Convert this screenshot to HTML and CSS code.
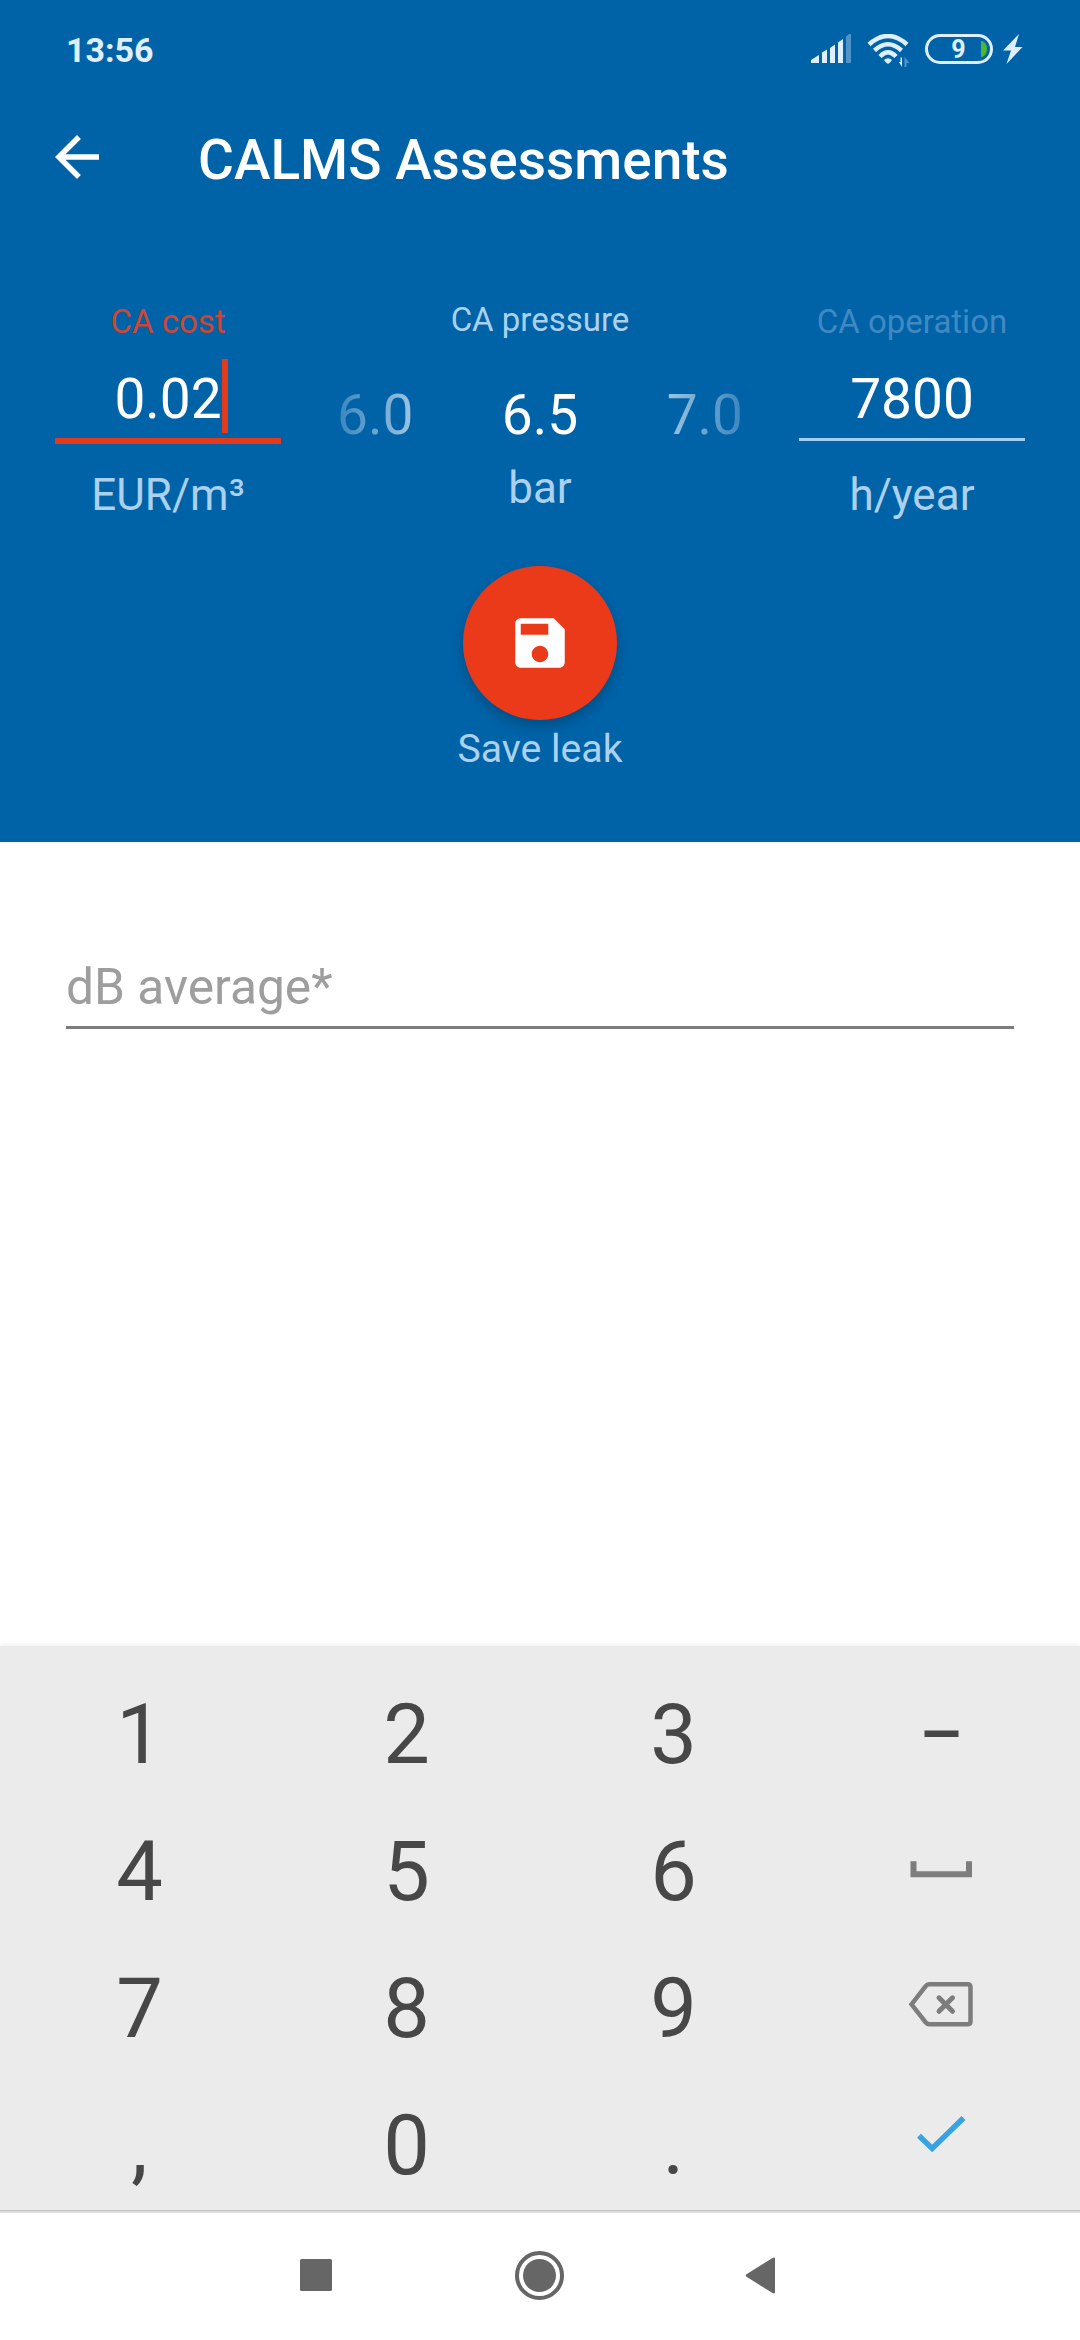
FILE: index.html
```
<!DOCTYPE html>
<html lang="en">
<head>
  <meta charset="UTF-8">
  <meta name="viewport" content="width=device-width, initial-scale=1.0">
  <title>CALMS Assessments</title>
  <link rel="stylesheet" href="styles.css">
</head>
<body>

  <header class="header">
    <div class="status-bar">
      <span class="time">13:56</span>
      <div class="status-icons">
        <svg class="signal" width="40" height="30" viewBox="0 0 40 30">
          <path d="M0 29v-3l8-5v8zM11 29V18.500l5-3V29zM19 29v-15l5-3.500V29zM27 29V8.500l5-3.500v24z"/>
          <path class="dim" d="M35 29V2.500l3-2.500h2v29z"/>
        </svg>
        <svg class="wifi" width="44" height="34" viewBox="0 0 44 34">
          <path class="arc" d="M2 10.500Q21 -6.500 40 10.500M7.500 16.500Q21 4 34.500 16.500M13 22.500Q21 14 29 22.500"/>
          <path d="M17 26Q21 22.500 25 26Q24 28 21 30Q18 28 17 26z"/>
          <path d="M35 23.500v9.500l-3-5h1.500v-4.500z"/>
          <path class="dim" d="M37.500 33v-10l5 6h-3v4z"/>
        </svg>
        <div class="battery">9</div>
        <svg class="bolt" width="20" height="30" viewBox="0 0 20 30">
          <path d="M16 0L0 16.500H8L3.500 30L19.500 13H12z"/>
        </svg>
      </div>
    </div>

    <div class="app-bar">
      <svg class="back" width="66" height="66" viewBox="0 0 24 24">
        <path d="M20 11H7.830l5.590-5.590L12 4l-8 8 8 8 1.410-1.410L7.830 13H20v-2z"/>
      </svg>
      <h1>CALMS Assessments</h1>
    </div>

    <div class="readings">
      <div class="field focused">
        <div class="label">CA cost</div>
        <div class="value"><span class="caret">0.02</span></div>
        <div class="unit">EUR/m³</div>
      </div>
      <div class="pressure">
        <div class="label">CA pressure</div>
        <div class="picker">
          <span class="prev">6.0</span>
          <span>6.5</span>
          <span class="next">7.0</span>
        </div>
        <div class="unit">bar</div>
      </div>
      <div class="field">
        <div class="label">CA operation</div>
        <div class="value">7800</div>
        <div class="unit">h/year</div>
      </div>
    </div>

    <div class="save">
      <button class="fab">
        <svg width="66" height="66" viewBox="0 0 24 24">
          <path d="M17 3H5c-1.110 0-2 .9-2 2v14c0 1.100.890 2 2 2h14c1.100 0 2-.9 2-2V7l-4-4zm-5 16c-1.660 0-3-1.340-3-3s1.340-3 3-3 3 1.340 3 3-1.340 3-3 3zm3-10H5V5h10v4z"/>
        </svg>
      </button>
      <span class="save-label">Save leak</span>
    </div>
  </header>

  <main class="content">
    <div class="db-field">dB average*</div>
  </main>

  <div class="keypad">
    <span class="key">1</span>
    <span class="key">2</span>
    <span class="key">3</span>
    <span class="key">
      <svg width="80" height="80" viewBox="0 0 80 80">
        <rect class="minus" x="23.500" y="35.500" width="34" height="6.500"/>
      </svg>
    </span>
    <span class="key">4</span>
    <span class="key">5</span>
    <span class="key">6</span>
    <span class="key">
      <svg width="80" height="80" viewBox="0 0 80 80">
        <path class="stroke space" d="M12.500 29.200v13h55.500v-13"/>
      </svg>
    </span>
    <span class="key">7</span>
    <span class="key">8</span>
    <span class="key">9</span>
    <span class="key">
      <svg width="80" height="80" viewBox="0 0 80 80">
        <path class="stroke" d="M10.500 35.300L24.500 17.300Q26 15.300 28 15.300H66.500Q69.500 15.300 69.500 18.300V52.200Q69.500 55.200 66.500 55.200H28Q26 55.200 24.500 53.200z"/>
        <path class="stroke cross" d="M38 28.800l13.500 13.500M51.500 28.800l-13.500 13.500"/>
      </svg>
    </span>
    <span class="key">,</span>
    <span class="key">0</span>
    <span class="key">.</span>
    <span class="key">
      <svg width="80" height="80" viewBox="0 0 80 80">
        <path class="check" d="M18 29.800L31.200 42.500L62.500 12"/>
      </svg>
    </span>
  </div>

  <nav class="nav-bar">
    <svg width="50" height="50" viewBox="0 0 50 50">
      <rect x="9" y="8" width="32" height="32" rx="1.500"/>
    </svg>
    <svg width="50" height="50" viewBox="0 0 50 50">
      <circle class="ring" cx="24.500" cy="24.500" r="22.500"/>
      <circle cx="24.500" cy="24.500" r="16.500"/>
    </svg>
    <svg width="50" height="50" viewBox="0 0 50 50">
      <path d="M7.500 23.300L33.500 7Q36 5.800 36 8V41Q36 43.200 33.500 42L7.500 25.700Q6 24.500 7.500 23.300z"/>
    </svg>
  </nav>

</body>
</html>
```
FILE: styles.css
```
* {
  box-sizing: border-box;
}

body {
  font-family: Roboto, "Liberation Sans", sans-serif;
  width: 1080px;
  height: 2340px;
  margin: 0;
  background: #fff;
  display: flex;
  flex-direction: column;
  overflow: hidden;
}

svg {
  display: block;
}

/* Header */
.header {
  height: 842px;
  background: #0063a8;
  color: #fff;
}

.status-bar {
  height: 80px;
  padding: 20px 57px 0 66px;
  display: flex;
  justify-content: space-between;
  align-items: center;
  color: #e0efff;
}

.time {
  font-size: 34px;
  font-weight: 700;
  line-height: 60px;
}

.status-icons {
  display: flex;
  align-items: flex-start;
  height: 32px;
}

.status-icons svg {
  fill: #e0efff;
}

.status-icons .dim {
  fill: #4f93c8;
}

.wifi {
  margin-left: 16px;
}

.wifi .arc {
  fill: none;
  stroke: #e0efff;
  stroke-width: 4.500;
}

.battery {
  position: relative;
  width: 68px;
  height: 30px;
  margin: 0 10px 0 14px;
  border: 3px solid #e0efff;
  border-radius: 15px;
  font-size: 25px;
  font-weight: 700;
  line-height: 25px;
  text-align: center;
  padding-right: 1px;
}

.battery::after {
  content: "";
  position: absolute;
  right: 3px;
  top: 4px;
  width: 6px;
  height: 16px;
  background: #4cb82c;
  border-radius: 0 6px 6px 0 / 0 8px 8px 0;
}

.app-bar {
  height: 154px;
  padding-left: 44px;
  display: flex;
  align-items: center;
}

.back {
  fill: #fff;
}

h1 {
  margin: 5px 0 0 88px;
  font-size: 55px;
  font-weight: 500;
  line-height: 72px;
}

/* Readings */
.readings {
  display: flex;
  justify-content: space-between;
  height: 286px;
  padding: 68px 55px 0;
  text-align: center;
}

.field {
  width: 226px;
}

.label {
  font-size: 33px;
  line-height: 40px;
  color: #4089c2;
}

.value {
  height: 79px;
  margin-top: 20px;
  border-bottom: 3px solid #a4cdf0;
  font-size: 55px;
  line-height: 74px;
}

.unit {
  font-size: 44px;
  line-height: 50px;
  color: #abd1ef;
}

.field .unit {
  margin-top: 29px;
}

.focused .label {
  color: #cf4532;
}

.focused .value {
  height: 82px;
  border-bottom: 6px solid #e5391c;
}

.focused .unit {
  margin-top: 26px;
}

.caret {
  position: relative;
}

.caret::after {
  content: "";
  position: absolute;
  right: -6px;
  top: -8px;
  width: 6px;
  height: 74px;
  background: #e5391c;
}

.pressure {
  width: 448px;
  margin-top: -2px;
}

.pressure .label {
  color: #abd1ef;
}

.picker {
  display: flex;
  justify-content: space-between;
  margin: 38px 21px 11px;
  font-size: 55px;
  line-height: 74px;
}

.prev, .next {
  color: transparent;
  background: linear-gradient(to right, #3a85bf, #9cc5e3);
  -webkit-background-clip: text;
  background-clip: text;
}

.next {
  background-image: linear-gradient(to left, #3a85bf, #9cc5e3);
}

/* Save */
.save {
  display: flex;
  flex-direction: column;
  align-items: center;
  padding-top: 46px;
}

.fab {
  display: flex;
  align-items: center;
  justify-content: center;
  width: 154px;
  height: 154px;
  padding: 0;
  border: none;
  border-radius: 50%;
  background: #ea3a1a;
  box-shadow: 0 6px 14px rgba(0, 0, 0, 0.22);
}

.fab svg {
  fill: #fff;
}

.save-label {
  margin-top: 6px;
  font-size: 39.2px;
  line-height: 46px;
  color: #abd1ef;
}

/* Form */
.content {
  height: 804px;
  padding: 112px 66px 0;
}

.db-field {
  height: 75px;
  border-bottom: 3px solid #7d7d7d;
  font-size: 49.7px;
  line-height: 66px;
  color: #9e9e9e;
}

/* Keyboard */
.keypad {
  display: grid;
  grid-template-columns: repeat(4, 1fr);
  grid-auto-rows: 137px;
  height: 564px;
  padding: 20px 6px 0;
  background: #ebebeb;
  box-shadow: 0 -2px 6px rgba(0, 0, 0, 0.06);
  color: #474747;
}

.key {
  display: flex;
  align-items: center;
  justify-content: center;
  font-size: 83px;
  line-height: 137px;
}

.minus {
  fill: #474747;
}

.stroke {
  fill: none;
  stroke: #7d7d7d;
  stroke-width: 4.500;
}

.space {
  stroke-width: 6;
}

.cross {
  stroke-width: 5;
  stroke-linecap: round;
}

.check {
  fill: none;
  stroke: #36a3e2;
  stroke-width: 5.500;
}

/* Navigation bar */
.nav-bar {
  display: flex;
  gap: 174px;
  height: 130px;
  padding: 40px 0 0 291px;
  border-top: 1px solid #c4c4c4;
  box-shadow: inset 0 2px 0 #dedede;
  background: #fff;
  position: relative;
}

.nav-bar svg {
  fill: #666;
}

.nav-bar .ring {
  fill: none;
  stroke: #666;
  stroke-width: 4;
}
```
